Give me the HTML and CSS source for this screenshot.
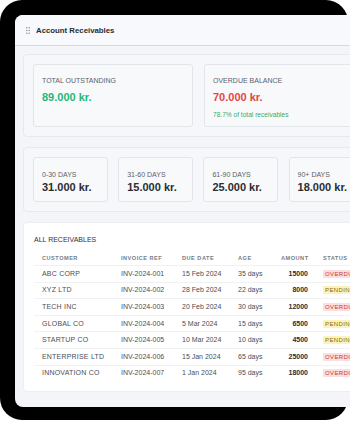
FILE: index.html
```html
<!DOCTYPE html>
<html lang="en">
<head>
  <meta charset="UTF-8">
  <meta name="viewport" content="width=device-width, initial-scale=1.0">
  <title>Account Receivables</title>
  <link rel="stylesheet" href="styles.css">
</head>
<body>
  <div class="device">
    <div class="screen">
      <div class="header">
        <svg class="grip" width="4" height="7" viewBox="0 0 4 7">
          <circle cx="0.8" cy="0.8" r="0.75"/><circle cx="3.2" cy="0.8" r="0.75"/>
          <circle cx="0.8" cy="3.5" r="0.75"/><circle cx="3.2" cy="3.5" r="0.75"/>
          <circle cx="0.8" cy="6.2" r="0.75"/><circle cx="3.2" cy="6.2" r="0.75"/>
        </svg>
        <span class="title">Account Receivables</span>
      </div>

      <div class="content">
        <div class="panel">
          <div class="stats">
            <div class="card stat">
              <div class="label">Total Outstanding</div>
              <div class="value green">89.000 kr.</div>
            </div>
            <div class="card stat">
              <div class="label">Overdue Balance</div>
              <div class="value red">70.000 kr.</div>
              <div class="note">78.7% of total receivables</div>
            </div>
          </div>
        </div>

        <div class="panel">
          <div class="aging">
            <div class="card age"><div class="label">0-30 Days</div><div class="value">31.000 kr.</div></div>
            <div class="card age"><div class="label">31-60 Days</div><div class="value">15.000 kr.</div></div>
            <div class="card age"><div class="label">61-90 Days</div><div class="value">25.000 kr.</div></div>
            <div class="card age"><div class="label">90+ Days</div><div class="value">18.000 kr.</div></div>
          </div>
        </div>

        <div class="panel list">
          <div class="list-title">All Receivables</div>
          <table>
            <colgroup>
              <col style="width:79px"><col style="width:61px"><col style="width:56px">
              <col style="width:43px"><col style="width:43px"><col>
            </colgroup>
            <thead>
              <tr><th>Customer</th><th>Invoice Ref</th><th>Due Date</th><th>Age</th><th class="num">Amount</th><th>Status</th></tr>
            </thead>
            <tbody>
              <tr><td>ABC Corp</td><td>INV-2024-001</td><td>15 Feb 2024</td><td>35 days</td><td class="num">15000</td><td><span class="badge overdue">Overdue</span></td></tr>
              <tr><td>XYZ Ltd</td><td>INV-2024-002</td><td>28 Feb 2024</td><td>22 days</td><td class="num">8000</td><td><span class="badge pending">Pending</span></td></tr>
              <tr><td>Tech Inc</td><td>INV-2024-003</td><td>20 Feb 2024</td><td>30 days</td><td class="num">12000</td><td><span class="badge overdue">Overdue</span></td></tr>
              <tr><td>Global Co</td><td>INV-2024-004</td><td>5 Mar 2024</td><td>15 days</td><td class="num">6500</td><td><span class="badge pending">Pending</span></td></tr>
              <tr><td>Startup Co</td><td>INV-2024-005</td><td>10 Mar 2024</td><td>10 days</td><td class="num">4500</td><td><span class="badge pending">Pending</span></td></tr>
              <tr><td>Enterprise Ltd</td><td>INV-2024-006</td><td>15 Jan 2024</td><td>65 days</td><td class="num">25000</td><td><span class="badge overdue">Overdue</span></td></tr>
              <tr><td>Innovation Co</td><td>INV-2024-007</td><td>1 Jan 2024</td><td>95 days</td><td class="num">18000</td><td><span class="badge overdue">Overdue</span></td></tr>
            </tbody>
          </table>
        </div>
      </div>
    </div>
  </div>
</body>
</html>
```

FILE: styles.css
```css
body { margin: 0; background: #fff; font-family: "Liberation Sans", Arial, sans-serif; color: #2b2e34; overflow: hidden; }

.device { width: 348px; height: 420px; box-sizing: border-box; padding: 15px 0 13px 15px; background: #000; border-radius: 22px; }
.screen { width: 369px; height: 392px; background: #f3f5f8; border-radius: 8px 0 0 8px; overflow: hidden; }

.header { height: 30px; display: flex; align-items: center; padding-left: 11px; background: #f7f9fc; border-bottom: 1px solid #d6d9de; }
.grip { fill: #8a8f98; margin-right: 6px; }
.title { font-size: 7.8px; font-weight: bold; color: #2a2c31; }

.content { padding: 8px 8px 0 8px; display: flex; flex-direction: column; gap: 10px; }
.panel { background: #f6f7fa; border: 1px solid #e7e9ed; border-radius: 4px; padding: 9px; }

.card { background: #f8f9fb; border: 1px solid #e2e5ea; border-radius: 3px; box-sizing: border-box; }
.label { font-size: 7px; text-transform: uppercase; color: #5a5f69; line-height: 8px; }
.value { font-size: 11px; font-weight: bold; color: #2a2d33; line-height: 13px; }
.green { color: #27b877; }
.red { color: #e64545; }
.note { font-size: 6.6px; color: #3caa6a; margin-top: 7px; line-height: 8px; }

.stats { display: grid; grid-template-columns: 160px 160px; gap: 11px; }
.stat { height: 63px; padding: 12px 8px 0 8px; }
.stat .value { margin-top: 6px; }

.aging { display: grid; grid-template-columns: repeat(4, 74.5px); gap: 10.7px; }
.age { height: 45px; padding: 13px 8px 0 8px; }
.age .value { margin-top: 2px; }

.panel.list { background: #fff; border-color: #eceef1; padding: 13px 10px 10px 10px; }
.list-title { font-size: 7px; text-transform: uppercase; color: #2f3238; line-height: 8px; margin-bottom: 7px; }

table { width: 331px; table-layout: fixed; border-collapse: collapse; }
th, td { padding: 0 8px; text-align: left; white-space: nowrap; overflow: visible; line-height: 8px; }
th:last-child, td:last-child { padding-left: 7px; }
th { font-size: 5.6px; letter-spacing: 0.5px; font-weight: bold; color: #767c87; text-transform: uppercase; height: 14px; }
td { font-size: 7px; color: #4a4e56; height: 15.6px; border-top: 1px solid #f0f1f3; }
td:first-child { text-transform: uppercase; letter-spacing: 0.2px; }
.num { text-align: right; }
td.num { font-weight: bold; color: #2a2d33; }
.badge { display: inline-block; font-size: 6px; letter-spacing: 0.4px; text-transform: uppercase; padding: 1px 2px; line-height: 6px; border-radius: 1px; }
.overdue { background: #fddede; color: #c93a3a; }
.pending { background: #fdf3b8; color: #8a6a08; }
```
